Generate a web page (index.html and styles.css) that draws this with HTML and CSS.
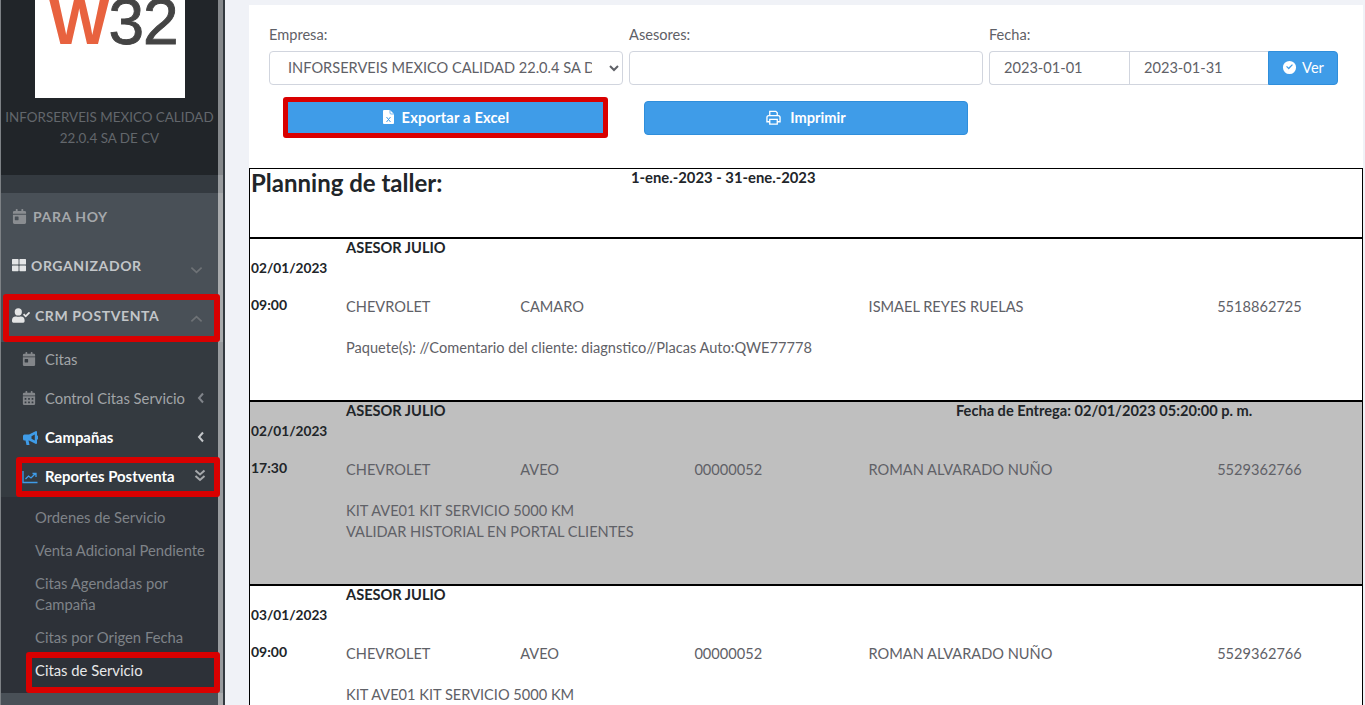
FILE: index.html
```html
<!DOCTYPE html>
<html lang="es">
<head>
<meta charset="utf-8">
<title>Planning de taller</title>
<link rel="stylesheet" href="styles.css">
</head>
<body>
<div class="app">
  <aside class="sidebar">
    <div class="nav">
      <div class="brand">
        <div class="logo"><span class="w">W</span><span class="n">32</span></div>
        <p class="company">INFORSERVEIS MEXICO CALIDAD<br>22.0.4 SA DE CV</p>
      </div>
      <div class="gap"></div>
      <div class="top-items">
        <a class="top hoy"><svg class="ic" viewBox="0 0 448 512"><path d="M0 464a48 48 0 0 0 48 48h352a48 48 0 0 0 48-48V192H0zm64-192a16 16 0 0 1 16-16h96a16 16 0 0 1 16 16v96a16 16 0 0 1-16 16H80a16 16 0 0 1-16-16zM400 64h-48V16a16 16 0 0 0-16-16h-32a16 16 0 0 0-16 16v48H160V16a16 16 0 0 0-16-16h-32a16 16 0 0 0-16 16v48H48A48 48 0 0 0 0 112v48h448v-48a48 48 0 0 0-48-48z"/></svg>PARA HOY</a>
        <a class="top org"><svg class="ic grid" viewBox="0 0 512 512"><path d="M296 32h192a24 24 0 0 1 24 24v160a24 24 0 0 1-24 24H296a24 24 0 0 1-24-24V56a24 24 0 0 1 24-24zm-80 0H24A24 24 0 0 0 0 56v160a24 24 0 0 0 24 24h192a24 24 0 0 0 24-24V56a24 24 0 0 0-24-24zM0 296v160a24 24 0 0 0 24 24h192a24 24 0 0 0 24-24V296a24 24 0 0 0-24-24H24a24 24 0 0 0-24 24zm296 184h192a24 24 0 0 0 24-24V296a24 24 0 0 0-24-24H296a24 24 0 0 0-24 24v160a24 24 0 0 0 24 24z"/></svg>ORGANIZADOR<svg class="chev" viewBox="0 0 14 8"><path d="M1.500 1.500 7 6.500l5.500-5"/></svg></a>
        <a class="top crm"><svg class="ic usr" viewBox="0 0 640 512"><path d="M224 256a128 128 0 1 0 0-256 128 128 0 0 0 0 256zm89.600 32h-16.700a174 174 0 0 1-145.800 0h-16.700A134.400 134.400 0 0 0 0 422.400V464a48 48 0 0 0 48 48h352a48 48 0 0 0 48-48v-41.600A134.400 134.400 0 0 0 313.600 288zM637 159.600l-27.800-28.100a11.900 11.900 0 0 0-16.900 0L487.500 235.500l-45.500-45.800a11.900 11.900 0 0 0-16.900 0l-28.100 27.900a11.900 11.900 0 0 0 0 16.900l81.800 82.400a11.900 11.900 0 0 0 16.900 0l141.700-140.500a12 12 0 0 0-.4-16.800z"/></svg>CRM POSTVENTA<svg class="chev" viewBox="0 0 14 8"><path d="M1.500 6.500 7 1.500l5.500 5"/></svg><span class="mark"></span></a>
      </div>
      <div class="sub">
        <a class="item"><svg class="ic2" viewBox="0 0 448 512"><path d="M0 464a48 48 0 0 0 48 48h352a48 48 0 0 0 48-48V192H0zm64-192a16 16 0 0 1 16-16h96a16 16 0 0 1 16 16v96a16 16 0 0 1-16 16H80a16 16 0 0 1-16-16zM400 64h-48V16a16 16 0 0 0-16-16h-32a16 16 0 0 0-16 16v48H160V16a16 16 0 0 0-16-16h-32a16 16 0 0 0-16 16v48H48A48 48 0 0 0 0 112v48h448v-48a48 48 0 0 0-48-48z"/></svg>Citas</a>
        <a class="item"><svg class="ic2" viewBox="0 0 448 512"><path d="M0 464a48 48 0 0 0 48 48h352a48 48 0 0 0 48-48V192H0zm320-196a12 12 0 0 1 12-12h40a12 12 0 0 1 12 12v40a12 12 0 0 1-12 12h-40a12 12 0 0 1-12-12zm0 128a12 12 0 0 1 12-12h40a12 12 0 0 1 12 12v40a12 12 0 0 1-12 12h-40a12 12 0 0 1-12-12zM192 268a12 12 0 0 1 12-12h40a12 12 0 0 1 12 12v40a12 12 0 0 1-12 12h-40a12 12 0 0 1-12-12zm0 128a12 12 0 0 1 12-12h40a12 12 0 0 1 12 12v40a12 12 0 0 1-12 12h-40a12 12 0 0 1-12-12zM64 268a12 12 0 0 1 12-12h40a12 12 0 0 1 12 12v40a12 12 0 0 1-12 12H76a12 12 0 0 1-12-12zm0 128a12 12 0 0 1 12-12h40a12 12 0 0 1 12 12v40a12 12 0 0 1-12 12H76a12 12 0 0 1-12-12zM400 64h-48V16a16 16 0 0 0-16-16h-32a16 16 0 0 0-16 16v48H160V16a16 16 0 0 0-16-16h-32a16 16 0 0 0-16 16v48H48A48 48 0 0 0 0 112v48h448v-48a48 48 0 0 0-48-48z"/></svg>Control Citas Servicio<svg class="angle" viewBox="0 0 8 12"><path d="M6 1.500 2 6l4 4.500"/></svg></a>
        <a class="item on"><svg class="ic2 blue" viewBox="0 0 16 16"><path fill-rule="evenodd" d="M14 1 7 4.500H2.500A1.500 1.500 0 0 0 1 6v3a1.500 1.500 0 0 0 1.500 1.500h1L4.500 15h3l-1-4.500H7l7 3.500a1 1 0 0 0 1-1V9.500a2 2 0 0 0 0-4V2a1 1 0 0 0-1-1zM12.800 4.500 9.500 6.200v2.600l3.300 1.700z"/></svg>Campañas<svg class="angle" viewBox="0 0 8 12"><path d="M6 1.500 2 6l4 4.500"/></svg></a>
        <a class="item on"><svg class="ic2 blue line" viewBox="0 0 16 16"><path d="M1 2v11.500h14.500M3.500 10l3-3 2.500 2 4.500-4.500M10.500 4.500h3.500V8"/></svg>Reportes Postventa<svg class="dbl" viewBox="0 0 12 13"><path d="M1.500 1.500 6 5.500l4.500-4M1.500 7 6 11l4.500-4"/></svg><span class="mark"></span></a>
        <div class="nested">
          <a class="leaf">Ordenes de Servicio</a>
          <a class="leaf">Venta Adicional Pendiente</a>
          <a class="leaf">Citas Agendadas por<br>Campaña</a>
          <a class="leaf">Citas por Origen Fecha</a>
          <a class="leaf on">Citas de Servicio<span class="mark"></span></a>
        </div>
      </div>
      <div class="rest"></div>
    </div>
    <div class="scroll"></div>
  </aside>
  <main class="main">
    <section class="panel">
      <form class="filters">
        <label class="field"><span>Empresa:</span>
          <select class="ctl sel"><option>INFORSERVEIS MEXICO CALIDAD 22.0.4 SA DE CV</option></select>
        </label>
        <label class="field"><span>Asesores:</span>
          <input class="ctl" type="text">
        </label>
        <div class="field"><span>Fecha:</span>
          <div class="range">
            <input class="ctl d1" type="text" value="2023-01-01">
            <input class="ctl d2" type="text" value="2023-01-31">
            <button class="btn ver" type="button"><svg class="bi" viewBox="0 0 16 16"><path fill-rule="evenodd" d="M8 1a7 7 0 1 1 0 14A7 7 0 0 1 8 1zm3.600 4.300-.9-.9L7 8.100 5.300 6.400l-.9.9L7 9.900l.1.1z"/></svg>Ver</button>
          </div>
        </div>
      </form>
      <div class="actions">
        <button class="btn wide-btn export" type="button"><svg class="xls" viewBox="0 0 11 14"><path class="doc" d="M1 0h6l4 4v9a1 1 0 0 1-1 1H1a1 1 0 0 1-1-1V1a1 1 0 0 1 1-1z"/><path class="fold" d="M7 0v3a1 1 0 0 0 1 1h3"/><path class="cross" d="m3.500 7 4 5M7.500 7l-4 5"/></svg>Exportar a Excel<span class="mark"></span></button>
        <button class="btn wide-btn" type="button"><svg class="prn" viewBox="0 0 16 16"><path d="M4 6V1.500h6.500L12 3v3M4 12.500H1V8a2 2 0 0 1 2-2h10a2 2 0 0 1 2 2v4.500h-3M4 10h8v5H4z"/></svg>Imprimir</button>
      </div>
      <div class="report">
        <div class="rep-head">
          <h1>Planning de taller:</h1>
          <strong class="period">1-ene.-2023 - 31-ene.-2023</strong>
        </div>
        <article class="row r1">
          <div class="when"><b>02/01/2023</b><b class="time">09:00</b></div>
          <div class="info">
            <div class="who"><b class="adv">ASESOR JULIO</b></div>
            <div class="cols"><span>CHEVROLET</span><span>CAMARO</span><span></span><span>ISMAEL REYES RUELAS</span><span>5518862725</span></div>
            <p class="note">Paquete(s): //Comentario del cliente: diagnstico//Placas Auto:QWE77778</p>
          </div>
        </article>
        <article class="row r2 grey">
          <div class="when"><b>02/01/2023</b><b class="time">17:30</b></div>
          <div class="info">
            <div class="who"><b class="adv">ASESOR JULIO</b><b>Fecha de Entrega: 02/01/2023 05:20:00 p. m.</b></div>
            <div class="cols"><span>CHEVROLET</span><span>AVEO</span><span>00000052</span><span>ROMAN ALVARADO NUÑO</span><span>5529362766</span></div>
            <p class="note">KIT AVE01 KIT SERVICIO 5000 KM<br>VALIDAR HISTORIAL EN PORTAL CLIENTES</p>
          </div>
        </article>
        <article class="row r3">
          <div class="when"><b>03/01/2023</b><b class="time">09:00</b></div>
          <div class="info">
            <div class="who"><b class="adv">ASESOR JULIO</b></div>
            <div class="cols"><span>CHEVROLET</span><span>AVEO</span><span>00000052</span><span>ROMAN ALVARADO NUÑO</span><span>5529362766</span></div>
            <p class="note">KIT AVE01 KIT SERVICIO 5000 KM</p>
          </div>
        </article>
      </div>
    </section>
  </main>
</div>
</body>
</html>
```
FILE: styles.css
```css
* { box-sizing: border-box; }
html, body { margin: 0; height: 705px; overflow: hidden; }
body { font-family: "Lato", "Noto Sans", sans-serif; font-size: 14.6px; line-height: 21px; color: #5f6167; background: #f0f2f7; }
a { display: flex; }
.app { display: flex; height: 705px; }

.sidebar { width: 225px; flex: none; display: flex; height: 705px; border-right: 2px solid #343a40; overflow: hidden; }
.nav { width: 218px; flex: none; display: flex; flex-direction: column; height: 705px; background: #212529; border-left: 1px solid #7d8185; }
.scroll { width: 5px; background: linear-gradient(#85888b 0 175px, #989b9e 175px 193px, #a9abad 193px 342px, #989b9e 342px 693px, #a9abad 693px); }
.brand { height: 175px; display: flex; flex-direction: column; align-items: center; background: #212529; }
.logo { width: 150px; height: 98px; background: #fff; overflow: hidden; margin-left: 1px; font-family: "Liberation Sans", sans-serif; font-size: 64px; line-height: 44px; white-space: nowrap; padding-left: 14px; letter-spacing: -1px; }
.logo .w { color: #e8623f; font-weight: 700; }
.logo .n { color: #444; -webkit-text-stroke: .9px #444; }
.company { margin: 9px 0 0; width: 217px; font-size: 13.400px; text-align: center; color: #63676c; white-space: nowrap; }
.gap { height: 18px; background: #343a40; }
.top-items { background: #495057; }
.top { position: relative; align-items: center; height: 49.500px; padding: 0 0 2px 11px; font-size: 14px; font-weight: 700; letter-spacing: .6px; color: #c3c6c9; }
.org { padding-bottom: 4px; }
.hoy { color: #a5a8ab; }
.ic { width: 15px; height: 15px; fill: #8a8d91; margin-right: 6px; flex: none; }
.ic.grid { width: 14px; height: 14px; fill: #e4e5e6; margin-right: 5px; }
.ic.usr { width: 18px; fill: #e4e5e6; margin-right: 5px; }
.chev { position: absolute; right: 15px; top: 23px; width: 13px; height: 8px; fill: none; stroke: #6e7276; stroke-width: 1.800; }
.sub { background: #343a40; }
.item { position: relative; align-items: center; height: 38.750px; padding: 0 0 3px 21px; font-size: 14.800px; color: #a2a5a8; }
.item.on { color: #fff; font-weight: 700; font-size: 14.900px; padding-bottom: 1px; }
.ic2 { width: 14px; height: 14px; fill: #83868a; margin-right: 9px; flex: none; }
.ic2.blue { fill: #3f9ce8; width: 16px; height: 16px; margin-right: 7px; }
.ic2.line { fill: none; stroke: #3f9ce8; stroke-width: 1.300; }
.angle { position: absolute; right: 13px; top: 12px; width: 8px; height: 12px; fill: none; stroke: #80848a; stroke-width: 2; }
.item.on .angle { stroke: #c3c6c9; }
.dbl { position: absolute; right: 12px; top: 11px; width: 12px; height: 13px; fill: none; stroke: #a5a8ab; stroke-width: 2; }
.nested { background: #2d3138; padding: 4px 0 6px 34px; }
.leaf { position: relative; display: block; padding: 6px 8px 6px 0; font-size: 14.800px; color: #7f8388; }
.leaf.on { color: #e7e8e9; }
.rest { flex: 1; background: #495057; }
.mark { position: absolute; border: 6px solid #d90000; border-radius: 3px; pointer-events: none; }
.crm .mark { left: 2px; right: -2px; top: 2px; bottom: 0; }
.item .mark { left: 15px; right: -2px; top: -1px; bottom: 0; }
.leaf .mark { left: -9px; right: -2px; top: -2px; bottom: -6px; }

.main { flex: 1; padding: 5px 2px 0 24px; min-width: 0; }
.panel { background: #fff; height: 700px; }
.filters { display: flex; gap: 6px; padding: 18px 0 0 20px; }
.field { display: flex; flex-direction: column; width: 354px; flex: none; }
.field > span { height: 28px; line-height: 24px; }
.ctl { height: 34px; border: 1px solid #d1d5de; border-radius: 4px; padding: 0 14px 2px; font: inherit; color: #5f6167; background: #fff; width: 100%; }
.range { display: flex; }
.d1 { width: 140px; border-radius: 4px 0 0 4px; border-right: 0; }
.d2 { width: 139px; border-radius: 0; border-right: 0; }
.btn { position: relative; display: inline-flex; align-items: center; justify-content: center; background: #3f9ce8; color: #fff; border: 1px solid #2f8edb; border-radius: 4px; font: inherit; height: 34px; padding: 0 0 2px; }
.ver { width: 70px; flex: none; border-radius: 0 4px 4px 0; }
.ver .bi { width: 15px; height: 15px; margin-right: 5px; }
.bi { width: 14px; height: 14px; fill: #fff; margin-right: 8px; }
.xls { width: 11px; height: 14px; margin-right: 8px; }
.doc { fill: #fff; }
.fold { fill: none; stroke: #3f9ce8; stroke-width: .7; }
.cross { fill: none; stroke: #3f9ce8; stroke-width: 1; }
.prn { width: 15px; height: 15px; margin-right: 9px; fill: none; stroke: #fff; stroke-width: 1.400; }
.actions { display: flex; gap: 36px; padding: 16px 0 0 35px; }
.wide-btn { width: 324px; font-weight: 700; }
.export { letter-spacing: .2px; }
.wide-btn .mark { left: -2px; right: -1px; top: -5px; bottom: -4px; border-width: 5px; }
.report { margin-top: 33px; border-right: 1px solid #000; border-left: 1px solid #000; }
.rep-head { position: relative; height: 70px; border-top: 1px solid #000; border-bottom: 1px solid #000; padding-left: 1px; }
h1 { margin: 0; font-size: 24px; line-height: 28px; font-weight: 700; color: #212529; }
.period { position: absolute; left: 381px; top: -2px; font-size: 14.800px; color: #212529; }
.row { display: flex; border-top: 1px solid #000; border-bottom: 1px solid #000; padding-left: 1px; }
.r1 { height: 163px; }
.r2 { height: 184px; }
.r3 { height: 163px; }
.grey { background: #bfbfbf; }
.when { width: 95px; flex: none; display: flex; flex-direction: column; padding-top: 18px; font-size: 13.700px; color: #212529; }
.time { margin-top: 16px; font-size: 14px; }
.info { flex: 1; margin-top: -2px; }
.who { display: flex; color: #212529; }
.adv { width: 610px; flex: none; }
.cols { display: grid; grid-template-columns: repeat(3, 174.200px) 348.600px auto; margin-top: 38px; white-space: nowrap; }
.note { margin: 20px 0 0; }
```
